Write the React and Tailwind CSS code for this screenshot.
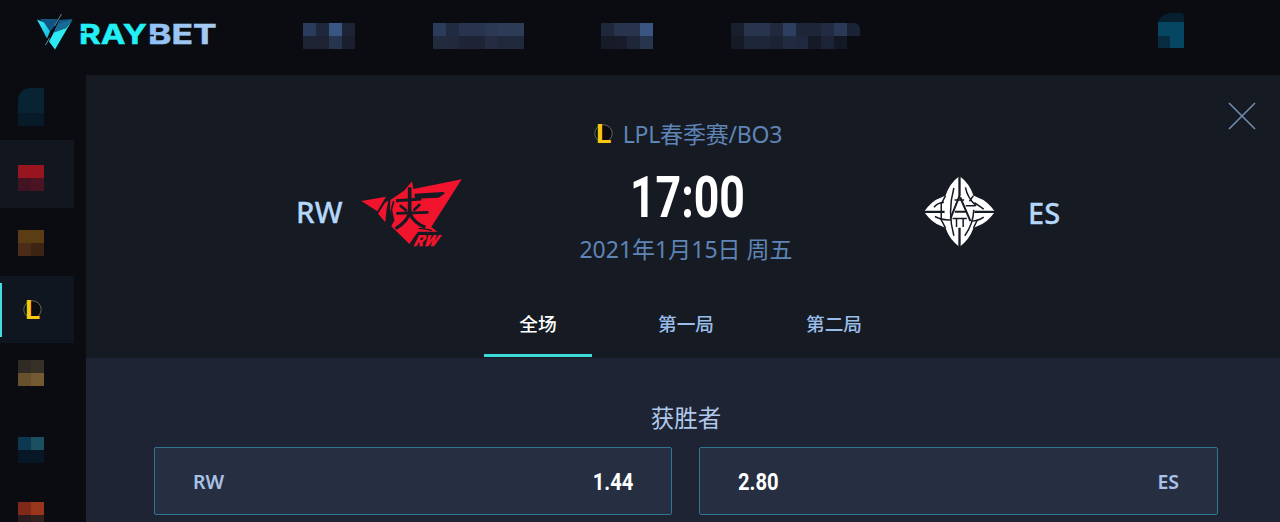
import React from 'react';
import clsx from 'clsx';

const NAV = [
    {
        width: 52,
        rows: [
            ['#2b3b5b', '#1e273b', '#3b5583', '#1c2434'],
            ['#1e2334', '#1e2334', '#27344d', '#191f2d'],
        ],
    },
    {
        width: 91,
        rows: [
            ['#2b3b5a', '#202a41', '#28334e', '#28334e', '#2b3955', '#2d3b57', '#2d3b57'],
            ['#222a3e', '#22293c', '#1e2436', '#1e2436', '#252c41', '#20283b', '#20283b'],
        ],
    },
    {
        width: 52,
        rows: [
            ['#1f273b', '#28344e', '#28344e', '#3b5583'],
            ['#171b28', '#181b29', '#1e263a', '#27344d'],
        ],
    },
    {
        width: 129,
        rows: [
            ['#181e2b', '#28344e', '#28344e', '#1f283c', '#2d3f60', '#1d2538', '#1d2539', '#212b42', '#2b3957', '#1a2236'],
            ['#151a26', '#1e2639', '#1e2639', '#1b2233', '#212b40', '#1f283c', '#161a27', '#1c2337', '#131824', 'none'],
        ],
    },
];

const TABS = ['全场', '第一局', '第二局'];

const Mosaic = ({ rows, width, height = 26, className }) => {
    const h = height / rows.length;
    return (
        <svg width={width} height={height} shapeRendering="crispEdges" className={clsx('block shrink-0', className)}>
            {rows.map((row, y) =>
                row.map((fill, x) => (
                    <rect
                        key={`${x}-${y}`}
                        x={(x * width) / row.length}
                        y={y * h}
                        width={width / row.length}
                        height={h}
                        fill={fill}
                    />
                ))
            )}
        </svg>
    );
};

const Logo = () => (
    <svg width="182" height="38" viewBox="0 0 182 38" className="block overflow-visible" role="img" aria-label="RAYBET">
        <defs>
            <linearGradient id="mark" x1="0" y1="0" x2="1" y2="1">
                <stop offset="0" stopColor="#35efff" />
                <stop offset="1" stopColor="#15b8d8" />
            </linearGradient>
            <linearGradient id="bet" x1="0" y1="0" x2="1" y2="0">
                <stop offset="0" stopColor="#8fc0f5" />
                <stop offset="1" stopColor="#a9cbf3" />
            </linearGradient>
        </defs>
        <path d="M3 6h19l-5 9-5 4z" fill="#105482" />
        <path d="M0 6.5L7 9.500l6 9-3 7z" fill="url(#mark)" />
        <path d="M22 7l13.500-1-6 7-12 4z" fill="#155a88" />
        <path d="M35.500 6.5L18 36.500l-6-8L17 19l12-4z" fill="#2ce9f4" />
        <path d="M35.500 6.5L21 11l-5 9 13-5z" fill="#176b96" />
        <path d="M24 1L9 32" stroke="#0a0c11" strokeWidth="1.600" />
        <path d="M24.500 1L17.500 13M12.500 25l-4 7" stroke="#6fb3ca" strokeWidth="0.8" />
        <g fontSize="27.500" strokeWidth="0.5" className="font-[Inter,sans-serif] font-bold">
            <text x="42" y="31" textLength="68" lengthAdjust="spacingAndGlyphs" fill="#22f0f6" stroke="#22f0f6">
                RAY
            </text>
            <text x="111" y="31" textLength="68.500" lengthAdjust="spacingAndGlyphs" fill="url(#bet)" stroke="url(#bet)">
                BET
            </text>
        </g>
        <path d="M42 19h6M111 22.500h6" stroke="#0a0c11" strokeWidth="1.600" />
    </svg>
);

const LeagueIcon = ({ className }) => (
    <svg width="22" height="22" viewBox="0 0 22 22" className={clsx('block shrink-0 overflow-visible', className)}>
        <circle cx="11.500" cy="10.500" r="8.700" fill="#0b0c10" stroke="#756e55" strokeWidth="0.9" />
        <text x="4" y="20" fontSize="26" textLength="15" lengthAdjust="spacingAndGlyphs" fill="#fbc811" className="font-[Roboto,sans-serif] font-bold">
            L
        </text>
    </svg>
);

const RogueWarriorsLogo = () => (
    <svg width="101" height="69" viewBox="33 38 303 207" className="block overflow-visible">
        <path d="M34 107L108 94 82 138z" fill="#f2142c" />
        <path d="M84 145l21-33 10-6-6 31-3 34z" fill="#f2142c" />
        <path d="M121 104l41-28 24-28 4 23 145-29-91 143 18 14h-58l-26 37-54-53 8-16-12-33z" fill="#f2142c" />
        <path d="M194 85l84-5 8 3-20 14-72 3z" fill="#151a23" />
        <g fill="none" stroke="#151a23">
            <path d="M179 66v80" strokeWidth="11" />
            <path d="M138 106l76-5" strokeWidth="9" />
            <path d="M142 144l90-3M152 122l16 13M208 119l-15 14" strokeWidth="8" strokeLinecap="round" />
            <path d="M179 143c-7 22-22 35-42 47M181 147c8 18 25 31 45 39" strokeWidth="10" />
            <path d="M131 108l-7 26 7 34" strokeWidth="5" />
            <path d="M206 189l26 3 14 4" strokeWidth="4" />
        </g>
        <text
            fontSize="46"
            textLength="70"
            lengthAdjust="spacingAndGlyphs"
            fill="#f2142c"
            stroke="#f2142c"
            transform="translate(188 241) skewX(-27)"
            className="font-[Roboto,sans-serif] font-black"
        >
            RW
        </text>
    </svg>
);

const EStarLogo = () => (
    <svg width="71" height="71" viewBox="42 32 214 214" className="block">
        <path
            d="M149 32Q179 54 191 91L204 97Q232 106 256 140Q232 174 204 183L191 189Q179 224 149 246Q119 224 107 189L94 183Q66 174 42 140Q66 106 94 97L107 91Q119 54 149 32z"
            fill="#fff"
        />
        <g fill="none" stroke="#151a23" strokeWidth="4.500">
            <path d="M149 32v60M149 188v58M42 140h62M194 140h62" strokeWidth="7" />
            <path d="M107 91l-13 25v48l13 25M191 91l-12 17M191 189l12-25" />
            <path d="M132 68q-20 72 0 144M167 66q5 30 32 56M192 134q-1 42-27 78" />
            <path d="M72 126q12-14 30-15M75 154q22 12 48 10M194 112l28 20M222 156q-16 11-36 12" />
            <path d="M149 92l-27 68M151 96l31 72M135 140h33" strokeWidth="6" />
            <path d="M134 104h29M128 160h43M140 162v24M160 162v24M168 122h28" />
        </g>
    </svg>
);

const Header = () => (
    <header className="flex h-[75px] shrink-0 items-start bg-[#0a0c11]">
        <div className="w-[266px] shrink-0 pt-[13px] pl-[37px]">
            <Logo />
        </div>
        <nav className="flex gap-[77.5px] pt-[23px] pl-[37px]">
            {NAV.map((item, i) => (
                <Mosaic key={i} {...item} className={i === 3 ? 'rounded-tr-md' : ''} />
            ))}
        </nav>
        <svg width="26" height="36" className="mt-3 mr-24 ml-auto block">
            <path d="M0 10C3 3 9 1 15 1h8q3 0 3 3v6z" fill="#06202f" />
            <path d="M0 10h26v26H0z" fill="#074663" />
            <path d="M0 24h12v12H0z" fill="#072c41" />
        </svg>
    </header>
);

const Sidebar = () => (
    <aside className="w-[86px] shrink-0 bg-[#0a0c11]">
        <div className="h-[65px] pt-[13px] pl-[18px]">
            <Mosaic width={26} height={38} rows={[['#082333'], ['#082333'], ['#071a28']]} className="rounded-tl-xl" />
        </div>
        <div className="h-[68px] w-[74px] bg-[#11161f] pt-[25px] pl-[18px]">
            <Mosaic width={26} rows={[['#981520', '#981520'], ['#421323', '#4b1422']]} />
        </div>
        <div className="h-[68px] pt-[22px] pl-[18px]">
            <Mosaic width={26} rows={[['#5a3d14', '#5a3d14'], ['#4b2c18', '#3b2414']]} />
        </div>
        <div className="flex h-[67px] w-[74px] items-center bg-[#10161f]">
            <span className="h-[54px] w-[2px] bg-[#45dce0]" />
            <LeagueIcon className="ml-[19px]" />
        </div>
        <div className="flex flex-col pt-[17px] pl-[18px]">
            <Mosaic width={26} rows={[['#302b25', '#373026'], ['#66502d', '#725a33']]} />
            <Mosaic width={26} rows={[['#0d3852', '#1b5061'], ['#081726', '#081726']]} className="mt-[51px]" />
            <Mosaic width={26} rows={[['#80291b', '#98351b'], ['#2a1b20', '#30201e']]} className="mt-[39px]" />
        </div>
    </aside>
);

const MatchInfo = () => (
    <section className="relative flex h-[283px] shrink-0 flex-col bg-[#151a23]">
        <button className="absolute top-[27px] right-6" aria-label="关闭">
            <svg width="28" height="28" viewBox="0 0 28 28" fill="none" stroke="#7088ab" strokeWidth="1.7">
                <path d="M1 1l26 26M27 1L1 27" />
            </svg>
        </button>

        <div className="flex h-[222px]">
            <div className="flex w-[479px] items-center gap-4 pt-[53px] pl-[210px]">
                <span className="w-[49px] text-[29.5px] font-medium text-[#b4d8fa] [-webkit-text-stroke:0.3px]">RW</span>
                <RogueWarriorsLogo />
            </div>
            <div className="flex w-[242px] flex-col items-center whitespace-nowrap">
                <div className="mt-[43px] flex h-8 items-center gap-[9px] pl-[2px] text-[23px] leading-8 tracking-[-0.2px] text-[#5f84b6]">
                    <LeagueIcon />
                    <span>LPL春季赛/BO3</span>
                </div>
                <div className="mt-[17px] h-[62px] scale-x-[0.79] pl-[3px] font-[Roboto,sans-serif] text-[56.5px] leading-[62px] font-bold text-white">
                    17:00
                </div>
                <div className="mt-[4px] text-[23px] leading-8 text-[#5f84b6]">2021年1月15日 周五</div>
            </div>
            <div className="flex items-center gap-[33px] pt-[50px] pl-[117px]">
                <EStarLogo />
                <span className="pt-1 text-[29px] font-medium text-[#b4d8fa] [-webkit-text-stroke:0.3px]">ES</span>
            </div>
        </div>

        <div className="flex gap-10 pl-[398px]">
            {TABS.map((tab, i) => (
                <button
                    key={tab}
                    className={clsx(
                        'h-[60px] w-[108px] border-b-[3px] pb-[2px] text-[18.7px]',
                        i === 0 ? 'border-[#3edbdc] font-medium text-white' : 'border-transparent font-medium text-[#9abce9]'
                    )}
                >
                    {tab}
                </button>
            ))}
        </div>
    </section>
);

const Odds = ({ team, value, reverse }) => (
    <button
        className={clsx(
            'flex h-[68px] items-center justify-between rounded-[2px] border-[1.5px] border-[#2d7790] bg-[#262f41] px-[38px] pt-px',
            reverse ? 'w-[519px] flex-row-reverse' : 'w-[518px]'
        )}
    >
        <span className="text-[19.5px] font-semibold text-[#a9c2e6]">{team}</span>
        <span
            className={clsx(
                'scale-x-[0.84] font-[Roboto,sans-serif] text-[24px] font-bold text-white',
                reverse ? 'origin-left' : 'origin-right'
            )}
        >
            {value}
        </span>
    </button>
);

const App = () => (
    <div className="flex h-[522px] w-[1280px] flex-col overflow-hidden bg-[#0a0c11] font-['Noto_Sans','Noto_Sans_CJK_SC',sans-serif]">
        <Header />
        <div className="flex min-h-0 flex-1">
            <Sidebar />
            <main className="flex flex-1 flex-col">
                <MatchInfo />
                <section className="flex-1 bg-[#1e2433] pr-[62px] pl-[68px]">
                    <h2 className="pt-[44px] text-center text-[23.5px] leading-8 text-[#b0c8ec]">获胜者</h2>
                    <div className="mt-[13px] flex justify-between">
                        <Odds team="RW" value="1.44" />
                        <Odds team="ES" value="2.80" reverse />
                    </div>
                </section>
            </main>
        </div>
    </div>
);

export default App;
